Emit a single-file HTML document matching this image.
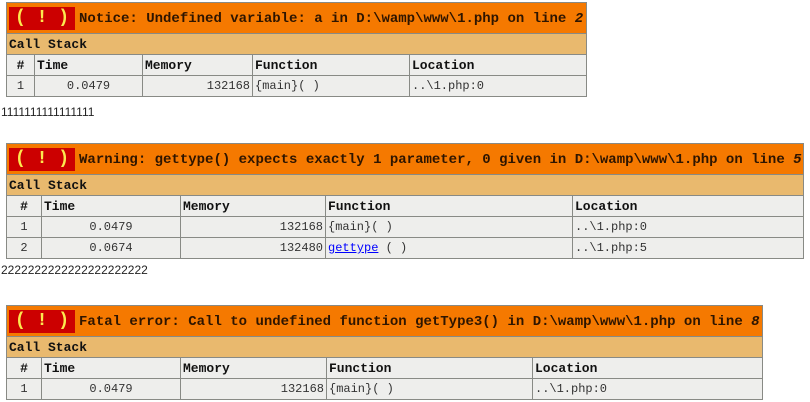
<!DOCTYPE html>
<html><head><meta charset="utf-8"><style>
body{margin:0;background:#fff;font-family:"Liberation Mono","Noto Sans CJK SC",monospace;}
table{position:absolute;left:6px;border-collapse:collapse;table-layout:fixed;}
td,th{border:1px solid #888a85;padding:0 2px;overflow:hidden;white-space:nowrap;}
th{background:#eeeeec;text-align:left;font-weight:bold;font-size:13px;height:20px;color:#111;}
td{background:#eeeeec;font-size:12px;height:20px;color:#333;font-family:"Liberation Mono",monospace;}
.t{background:#f57900;height:30px;font-size:14px;font-weight:bold;color:#2e1500;padding:0 2px;}
.t span{background:#cc0000;color:#fce94f;font-size:18px;padding:0 6px;display:inline-block;line-height:23px;margin-right:4px;}
.cs{background:#e9b96e;font-size:13px;font-weight:bold;height:20px;text-align:left;color:#111;}
.c{text-align:center}.r{text-align:right}
.txt{position:absolute;left:1px;font-size:12px;font-family:"Liberation Sans",sans-serif;color:#222;}
a{color:#00f;text-decoration:underline;}
</style></head><body>
<table style="top:2px;width:580px">
<col style="width:28px"><col style="width:108px"><col style="width:110px"><col style="width:157px"><col style="width:177px">
<tr><th colspan="5" class="t"><span>( ! )</span>Notice: Undefined variable: a in D:\wamp\www\1.php on line <i>2</i></th></tr>
<tr><th colspan="5" class="cs">Call Stack</th></tr>
<tr><th class="c">#</th><th>Time</th><th>Memory</th><th>Function</th><th>Location</th></tr>
<tr><td class="c">1</td><td class="c">0.0479</td><td class="r">132168</td><td>{main}( )</td><td>..\1.php:0</td></tr>
</table>
<div class="txt" style="top:105px">1111111111111111</div>

<table style="top:143px;width:797px">
<col style="width:35px"><col style="width:139px"><col style="width:145px"><col style="width:247px"><col style="width:231px">
<tr><th colspan="5" class="t"><span>( ! )</span>Warning: gettype() expects exactly 1 parameter, 0 given in D:\wamp\www\1.php on line <i>5</i></th></tr>
<tr><th colspan="5" class="cs">Call Stack</th></tr>
<tr><th class="c">#</th><th>Time</th><th>Memory</th><th>Function</th><th>Location</th></tr>
<tr><td class="c">1</td><td class="c">0.0479</td><td class="r">132168</td><td>{main}( )</td><td>..\1.php:0</td></tr>
<tr><td class="c">2</td><td class="c">0.0674</td><td class="r">132480</td><td><a>gettype</a> ( )</td><td>..\1.php:5</td></tr>
</table>
<div class="txt" style="top:263px">2222222222222222222222</div>

<table style="top:305px;width:756px">
<col style="width:35px"><col style="width:139px"><col style="width:146px"><col style="width:206px"><col style="width:230px">
<tr><th colspan="5" class="t"><span>( ! )</span>Fatal error: Call to undefined function getType3() in D:\wamp\www\1.php on line <i>8</i></th></tr>
<tr><th colspan="5" class="cs">Call Stack</th></tr>
<tr><th class="c">#</th><th>Time</th><th>Memory</th><th>Function</th><th>Location</th></tr>
<tr><td class="c">1</td><td class="c">0.0479</td><td class="r">132168</td><td>{main}( )</td><td>..\1.php:0</td></tr>
</table>
</body></html>
